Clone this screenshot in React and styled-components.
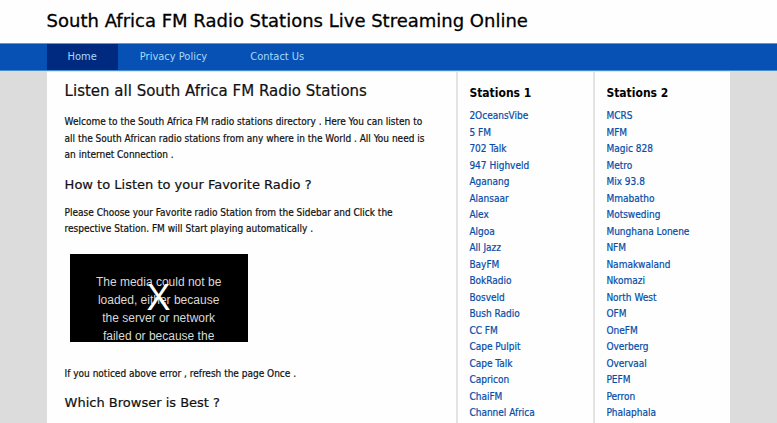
import React from "react";
import styled, { createGlobalStyle } from "styled-components";

const Global = createGlobalStyle`
  * { box-sizing: border-box; }
  html { background: #dcdcdc; }
  body {
    margin: 0;
    color: #111;
    font-family: "DejaVu Sans Condensed", "DejaVu Sans", sans-serif;
    font-size: 10px;
    line-height: 1.65;
    overflow: hidden;
  }
  h1, h2, h3, p, ul { margin: 0; padding: 0; }
`;

const Masthead = styled.header`
  background: #fefefe;
  padding: 0 6% 2px;
`;

const SiteTitle = styled.h1`
  font-family: "DejaVu Sans", sans-serif;
  font-size: 18px;
  font-weight: 400;
  line-height: 41px;
  color: #000;
  -webkit-text-stroke: 0.3px;
`;

const NavBar = styled.nav`
  display: flex;
  gap: 1px;
  height: 28px;
  padding: 0 6%;
  background: #0750b4;
  border-top: 1px solid #5a9ad8;
  border-bottom: 1px solid #4a8cd0;
`;

const NavLink = styled.a`
  display: flex;
  align-items: center;
  padding: 0 21px;
  background: ${(p) => (p.$active ? "#002a80" : "transparent")};
  color: #a8daf8;
  font-size: 11px;
  text-decoration: none;
`;

const Page = styled.div`
  display: flex;
  margin: 0 6%;
  padding-bottom: 20px;
  border-top: 1px solid #e4e4e4;
  background: #fefefe;
`;

const Article = styled.main`
  flex: 1;
  padding: 9px 24px 0 18px;
`;

const PageHeading = styled.h2`
  font-family: "DejaVu Sans", sans-serif;
  font-size: 15px;
  font-weight: 400;
  line-height: 20px;
  margin-bottom: 13px;
  -webkit-text-stroke: 0.2px;
`;

const Heading = styled.h3`
  font-family: "DejaVu Sans", sans-serif;
  font-size: 13px;
  font-weight: 400;
  line-height: 18px;
  margin: 12px 0 11px;
  -webkit-text-stroke: 0.2px;
`;

const Text = styled.p`
  -webkit-text-stroke: 0.2px;
`;

const Player = styled.section`
  position: relative;
  width: 178px;
  height: 88px;
  margin: 16px 0 24px 5px;
  padding: 19px 20px 0;
  overflow: hidden;
  background: #000;
  color: #d8d8d8;
  font: 12px/18px "Liberation Sans", Arial, sans-serif;
  text-align: center;
`;

const ErrorMark = styled.span`
  position: absolute;
  inset: 0;
  color: #fff;
  font-size: 36px;
  line-height: 88px;
`;

const Sidebar = styled.aside`
  flex: 0 0 137px;
  margin-bottom: -20px;
  padding: 12px 11px 20px;
  border-left: 2px solid #e4e4e4;
`;

const SideHeading = styled.h3`
  font-size: 12px;
  font-weight: 700;
  line-height: 18px;
  margin-bottom: 6px;
  color: #000;
`;

const StationList = styled.ul`
  list-style: none;
`;

const StationLink = styled.a`
  color: #064ca8;
  text-decoration: none;
  -webkit-text-stroke: 0.2px;
`;

const navItems = ["Home", "Privacy Policy", "Contact Us"];

const groups = [
  {
    title: "Stations 1",
    stations: [
      "2OceansVibe", "5 FM", "702 Talk", "947 Highveld", "Aganang", "Alansaar",
      "Alex", "Algoa", "All Jazz", "BayFM", "BokRadio", "Bosveld", "Bush Radio",
      "CC FM", "Cape Pulpit", "Cape Talk", "Capricon", "ChaiFM", "Channel Africa",
    ],
  },
  {
    title: "Stations 2",
    stations: [
      "MCRS", "MFM", "Magic 828", "Metro", "Mix 93.8", "Mmabatho", "Motsweding",
      "Munghana Lonene", "NFM", "Namakwaland", "Nkomazi", "North West", "OFM",
      "OneFM", "Overberg", "Overvaal", "PEFM", "Perron", "Phalaphala",
    ],
  },
];

export default function App() {
  return (
    <>
      <Global />
      <Masthead>
        <SiteTitle>South Africa FM Radio Stations Live Streaming Online</SiteTitle>
      </Masthead>
      <NavBar>
        {navItems.map((item, i) => (
          <NavLink key={item} href="#" $active={i === 0}>{item}</NavLink>
        ))}
      </NavBar>
      <Page>
        <Article>
          <PageHeading>Listen all South Africa FM Radio Stations</PageHeading>
          <Text>
            Welcome to the South Africa FM radio stations directory . Here You can listen to
            all the South African radio stations from any where in the World . All You need is
            an internet Connection .
          </Text>
          <Heading>How to Listen to your Favorite Radio ?</Heading>
          <Text>
            Please Choose your Favorite radio Station from the Sidebar and Click the
            respective Station. FM will Start playing automatically .
          </Text>
          <Player>
            The media could not be loaded, either because the server or network failed or because the
            <ErrorMark aria-hidden="true">X</ErrorMark>
          </Player>
          <Text>If you noticed above error , refresh the page Once .</Text>
          <Heading>Which Browser is Best ?</Heading>
        </Article>
        {groups.map((group) => (
          <Sidebar key={group.title}>
            <SideHeading>{group.title}</SideHeading>
            <StationList>
              {group.stations.map((name) => (
                <li key={name}><StationLink href="#">{name}</StationLink></li>
              ))}
            </StationList>
          </Sidebar>
        ))}
      </Page>
    </>
  );
}
